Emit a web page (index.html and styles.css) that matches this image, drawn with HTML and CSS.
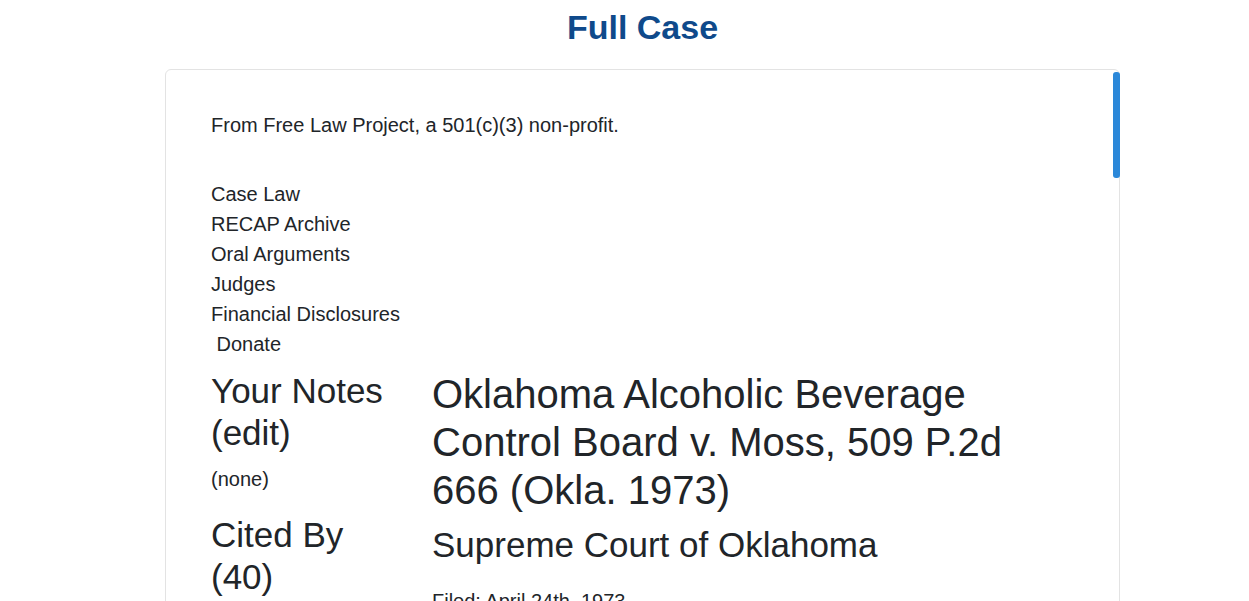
FILE: index.html
```html
<!DOCTYPE html>
<html lang="en">
<head>
<meta charset="utf-8">
<title>Full Case</title>
<link rel="stylesheet" href="styles.css">
</head>
<body>
<div class="page">
  <h1 class="page-title">Full Case</h1>
  <div class="card">
    <div class="scroll-thumb"></div>
    <p class="tagline">From Free Law Project, a 501(c)(3) non-profit.</p>
    <ul class="nav">
      <li>Case Law</li>
      <li>RECAP Archive</li>
      <li>Oral Arguments</li>
      <li>Judges</li>
      <li>Financial Disclosures</li>
      <li>&nbsp;Donate</li>
    </ul>
    <div class="case-row">
      <div class="sidebar">
        <h3 class="side-heading">Your Notes (edit)</h3>
        <p class="side-text">(none)</p>
        <h3 class="side-heading">Cited By (40)</h3>
      </div>
      <div class="main">
        <h1 class="case-title">Oklahoma Alcoholic Beverage Control Board v. Moss, 509 P.2d 666 (Okla. 1973)</h1>
        <h3 class="court">Supreme Court of Oklahoma</h3>
        <p class="filed">Filed: April 24th, 1973</p>
      </div>
    </div>
  </div>
</div>
</body>
</html>
```

FILE: styles.css
```css
html, body {
  margin: 0;
  padding: 0;
  background: #ffffff;
}

body {
  font-family: "Liberation Sans", Arial, sans-serif;
  color: #212529;
  font-size: 20px;
  line-height: 30px;
  overflow: hidden;
  height: 601px;
}

.page {
  width: 955px;
  margin-left: 165px;
}

.page-title {
  margin: 7px 0 22px;
  text-align: center;
  font-size: 34px;
  line-height: 40px;
  font-weight: bold;
  color: #0f4a8b;
}

.card {
  position: relative;
  border: 1px solid #e3e3e3;
  border-radius: 6px;
  padding: 40px 46px 0 45px;
  height: 600px;
  box-sizing: border-box;
}

.scroll-thumb {
  position: absolute;
  top: 2px;
  right: -1px;
  width: 7px;
  height: 106px;
  border-radius: 3px;
  background: #2b88d9;
}

.tagline {
  margin: 0;
}

.nav {
  list-style: none;
  margin: 39px 0 0;
  padding: 0;
}

.case-row {
  display: grid;
  grid-template-columns: 190px 600px;
  column-gap: 31px;
  margin-top: 11px;
}

.side-heading {
  margin: 0 0 10px;
  font-size: 35px;
  line-height: 42px;
  font-weight: normal;
}

.side-text {
  margin: 0 0 20px;
}

.case-title {
  margin: 0 0 10px;
  font-size: 40px;
  line-height: 48px;
  font-weight: normal;
}

.court {
  margin: 0 0 20px;
  font-size: 35px;
  line-height: 42px;
  font-weight: normal;
}

.filed {
  margin: 0;
}
```
